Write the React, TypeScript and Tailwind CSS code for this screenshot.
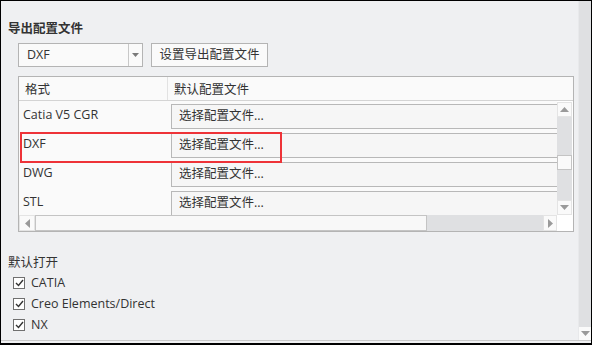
import React from 'react';

const font = { fontFamily: '"Open Sans", "Noto Sans CJK SC", sans-serif' };

const rows = ['Catia V5 CGR', 'DXF', 'DWG', 'STL'];
const apps = ['CATIA', 'Creo Elements/Direct', 'NX'];

const TriUp = () => (
  <svg width="9" height="5" viewBox="0 0 9 5"><path d="M4.5 0L9 5H0z" fill="#9a9a9a" /></svg>
);
const TriDown = () => (
  <svg width="9" height="5" viewBox="0 0 9 5"><path d="M0 0h9L4.5 5z" fill="#9a9a9a" /></svg>
);
const TriLeft = () => (
  <svg width="5" height="9" viewBox="0 0 5 9"><path d="M5 0v9L0 4.5z" fill="#9a9a9a" /></svg>
);
const TriRight = () => (
  <svg width="5" height="9" viewBox="0 0 5 9"><path d="M0 0v9L5 4.5z" fill="#9a9a9a" /></svg>
);

const Check = () => (
  <div className="w-[12px] h-[12px] border border-[#707070] bg-white flex items-center justify-center">
    <svg width="9" height="8" viewBox="0 0 9 8">
      <path d="M1 4l2.5 2.5L8 1" stroke="#333" strokeWidth="1.4" fill="none" />
    </svg>
  </div>
);

export default function App() {
  return (
    <div
      className="w-[592px] h-[345px] bg-[#eff0f2] border-x border-t border-b-2 border-black flex flex-col text-[12.5px] text-[#333] overflow-hidden"
      style={font}
    >
      <div className="flex h-[339px]">
        {/* main content */}
        <div className="w-[577px] flex flex-col">
          <div className="pl-[7px] pt-[20px] h-[42px] font-bold leading-[16px]">导出配置文件</div>

          <div className="flex gap-[8px] pl-[17px]">
            <div className="w-[125px] h-[24px] border border-[#b4b4b4] bg-[#fafafa] flex">
              <div className="flex-1 pl-[8px] leading-[22px]">DXF</div>
              <div className="w-[14px] border-l border-[#c8c8c8] flex items-center justify-center">
                <svg width="7" height="4" viewBox="0 0 7 4"><path d="M0 0h7L3.5 4z" fill="#7a7a7a" /></svg>
              </div>
            </div>
            <div className="w-[117px] h-[24px] border border-[#b4b4b4] bg-[#fafafa] flex items-center justify-center leading-[22px]">
              设置导出配置文件
            </div>
          </div>

          {/* table */}
          <div className="relative ml-[17px] mt-[9px] w-[556px] h-[156px] border border-[#b4b4b4] bg-[#fafafa] flex flex-col">
            <div className="h-[24px] flex border-b border-[#d4d4d4]">
              <div className="w-[149px] shrink-0 pl-[6px] pt-[2px] leading-[22px] border-r border-[#e2e2e2]">格式</div>
              <div className="flex-1 pl-[6px] pt-[2px] leading-[22px]">默认配置文件</div>
            </div>
            <div className="h-[114px] flex">
              <div className="w-[538px] shrink-0 overflow-hidden">
                {rows.map((r) => (
                  <div key={r} className="h-[29px] flex shrink-0">
                    <div className="w-[152px] shrink-0 pl-[4px] leading-[28px]">{r}</div>
                    <div className="pt-[3px] shrink-0">
                      <div className="w-[400px] h-[25px] border border-[#b8b8b8] bg-[#f6f6f6] pl-[7px] leading-[22px]">
                        选择配置文件...
                      </div>
                    </div>
                  </div>
                ))}
              </div>
              <div className="w-[16px] bg-white pr-[1px] pt-[1px]">
                <div className="w-[15px] h-[113px] bg-[#dfe0e2] flex flex-col">
                  <div className="h-[15px] bg-[#fafafa] border border-[#e4e4e4] flex items-center justify-center"><TriUp /></div>
                  <div className="h-[38px]" />
                  <div className="h-[15px] bg-[#fafafa] border border-[#c4c4c4]" />
                  <div className="flex-1" />
                  <div className="h-[15px] bg-[#fafafa] border border-[#e4e4e4] flex items-center justify-center"><TriDown /></div>
                </div>
              </div>
            </div>
            <div className="h-[16px] flex">
              <div className="w-[538px] shrink-0 bg-[#dfe0e2] flex">
                <div className="w-[16px] bg-[#fafafa] border border-[#e4e4e4] flex items-center justify-center"><TriLeft /></div>
                <div className="w-[392px] bg-[#f8f8f8] border border-[#c4c4c4]" />
                <div className="flex-1" />
                <div className="w-[14px] bg-[#fafafa] border border-[#e4e4e4] flex items-center justify-center"><TriRight /></div>
              </div>
              <div className="flex-1 bg-white" />
            </div>

            {/* highlight */}
            <div className="absolute left-[1px] top-[55px] w-[262px] h-[31px] border-2 border-[#ee3338]" />
          </div>

          <div className="pl-[7px] mt-[23px] leading-[16px]">默认打开</div>
          <div className="flex flex-col pl-[12px] mt-[1px]">
            {apps.map((a) => (
              <div key={a} className="h-[21px] flex items-center gap-[6px]">
                <Check />
                <span className="leading-[16px]">{a}</span>
              </div>
            ))}
          </div>
        </div>

        {/* outer scrollbar */}
        <div className="w-[13px] bg-[#dfe0e2] border-l border-[#e8e9eb] flex flex-col justify-end">
          <div className="h-[13px] bg-[#fafafa] flex items-center justify-center"><TriDown /></div>
        </div>
      </div>
      <div className="h-[1px] bg-[#c9c9c9]" />
    </div>
  );
}
